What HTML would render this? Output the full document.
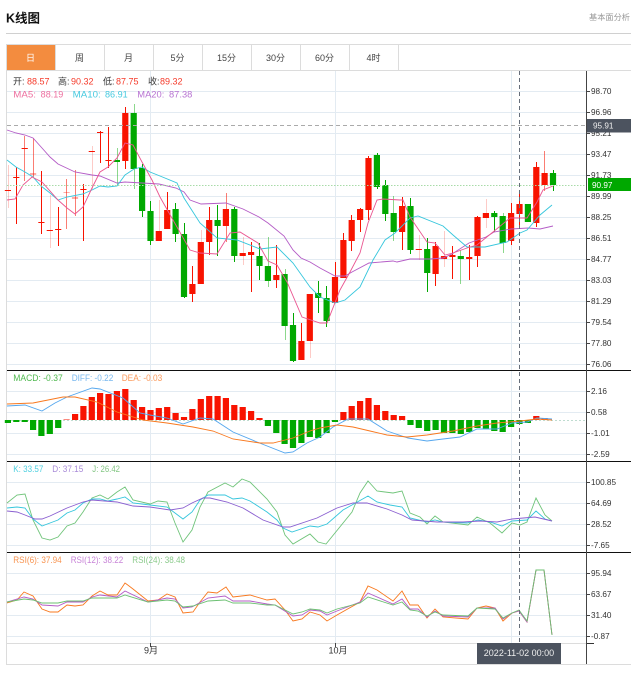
<!DOCTYPE html>
<html><head><meta charset="utf-8"><style>
html,body{margin:0;padding:0;background:#fff;width:631px;height:674px;overflow:hidden}
svg{display:block}
text{font-family:"Liberation Sans","Noto Sans CJK SC",sans-serif}
.ax{font-size:8.2px;fill:#333}
.lg{font-size:9px}
.tab{font-size:9px;fill:#444;text-anchor:middle}
</style></head><body>
<svg width="631" height="674" viewBox="0 0 631 674" xmlns="http://www.w3.org/2000/svg">
<!-- header -->
<text x="6" y="22.5" font-size="12.5" font-weight="bold" fill="#111">K线图</text>
<text x="589" y="20" font-size="8.2" fill="#999">基本面分析</text>
<path d="M6 33.5H631" stroke="#d0d0d0" fill="none"/>
<!-- tabs -->
<path d="M6 44.5H631M6 70.5H631" stroke="#dcdcdc" fill="none"/>
<rect x="7" y="45" width="48" height="25" fill="#f38c3f"/>
<path d="M6.5 44V664M55.5 45V70M104.5 45V70M153.5 45V70M202.5 45V70M251.5 45V70M300.5 45V70M349.5 45V70M398.5 45V70" stroke="#dcdcdc" fill="none"/>
<text class="tab" x="30.5" y="61" style="fill:#fff">日</text>
<text class="tab" x="79.5" y="61">周</text>
<text class="tab" x="128.5" y="61">月</text>
<text class="tab" x="177.5" y="61">5分</text>
<text class="tab" x="226.5" y="61">15分</text>
<text class="tab" x="275.5" y="61">30分</text>
<text class="tab" x="324.5" y="61">60分</text>
<text class="tab" x="373.5" y="61">4时</text>
<!-- grid -->
<path d="M7 91.5H586M7 112.5H586M7 133.5H586M7 154.5H586M7 175.5H586M7 196.5H586M7 217.5H586M7 238.5H586M7 259.5H586M7 280.5H586M7 301.5H586M7 322.5H586M7 343.5H586M7 364.5H586M7 391.5H586M7 412.5H586M7 433.5H586M7 454.5H586M7 482.5H586M7 503.5H586M7 524.5H586M7 545.5H586M7 573.5H586M7 594.5H586M7 615.5H586M7 636.5H586" stroke="#e3ebf2" fill="none"/>
<path d="M150.5 71V643M335.5 71V643M511.5 71V643" stroke="#e3ebf2" fill="none"/>
<!-- candles: wicks -->
<path fill="none" stroke="#f81300" d="M16.5 167V224M41.5 171V234M58.5 207V246M83.5 184V241M100.5 131V163M108.5 127V168M125.5 107V169M167.5 192V229M192.5 266V302M209.5 207V255M251.5 242V292M276.5 245V288M301.5 323V360M335.5 262V303M343.5 233V278M351.5 215V251M360.5 208V232M368.5 156V220M402.5 197V250M435.5 242V286M452.5 246V279M469.5 245V280M477.5 216V267M511.5 203V245M519.5 193V227M536.5 162V227"/>
<path fill="none" stroke="#f81300" stroke-opacity=".55" d="M24.5 136V181M33.5 138V177M66.5 179V229M75.5 170V216M226.5 193V242M544.5 151V191"/>
<path fill="none" stroke="#f81300" stroke-opacity=".22" d="M8.5 165V208M50.5 195V248M92.5 146V189M159.5 200V241M201.5 230V284M243.5 237V265M310.5 294V358M419.5 235V260M444.5 231V267M486.5 199V228"/>
<path fill="none" stroke="#00a800" d="M142.5 164V217M150.5 201V245M175.5 203V242M184.5 223V298M217.5 205V256M234.5 207V262M259.5 243V280M293.5 313V362M318.5 281V313M326.5 286V327M377.5 153V189M385.5 180V221M410.5 198V254M427.5 238V292M494.5 211V232M553.5 170V191"/>
<path fill="none" stroke="#00a800" stroke-opacity=".45" d="M117.5 148V185M134.5 104V189M268.5 237V287M285.5 269V340M393.5 196V241M460.5 250V284M503.5 213V253"/>
<!-- candles: bodies -->
<path fill="#f81300" d="M4.800 190h6.200v1h-6.200zM13.200 177h6.200v1h-6.200zM21.600 148h6.200v1h-6.200zM38.300 222h6.200v1h-6.200zM46.700 230h6.200v1h-6.200zM55.100 229h6.200v1h-6.200zM80.300 189h6.200v1h-6.200zM88.700 151h6.200v1h-6.200zM97 132h6.200v1h-6.200zM105.400 160h6.200v1h-6.200zM122.200 113h6.200v48h-6.200zM155.700 231h6.200v10h-6.200zM164.100 210h6.200v19h-6.200zM189.300 284h6.200v10h-6.200zM197.700 242h6.200v42h-6.200zM206.100 220h6.200v22h-6.200zM222.800 209h6.200v17h-6.200zM239.600 253h6.200v3h-6.200zM248 252h6.200v3h-6.200zM273.200 275h6.200v5h-6.200zM298.300 341h6.200v19h-6.200zM306.700 294h6.200v47h-6.200zM331.900 277h6.200v26h-6.200zM340.300 240h6.200v38h-6.200zM348.600 220h6.200v21h-6.200zM357 209h6.200v11h-6.200zM365.400 158h6.200v52h-6.200zM399 206h6.200v26h-6.200zM415.700 249h6.200v1h-6.200zM432.500 246h6.200v28h-6.200zM440.900 256h6.200v3h-6.200zM449.300 255h6.200v2h-6.200zM466.100 257h6.200v2h-6.200zM474.400 217h6.200v39h-6.200zM482.800 213h6.200v5h-6.200zM508 213h6.200v28h-6.200zM516.400 204h6.200v10h-6.200zM533.200 167h6.200v56h-6.200zM541.500 173h6.200v12h-6.200z"/>
<path fill="#f81300" fill-opacity=".35" d="M30 173h6.200v2h-6.200zM63.500 192h6.200v1h-6.200zM71.900 197h6.200v2h-6.200z"/>
<path fill="#00a800" d="M113.800 160h6.200v2h-6.200zM130.600 113h6.200v56h-6.200zM139 168h6.200v43h-6.200zM147.400 211h6.200v30h-6.200zM172.500 209h6.200v25h-6.200zM180.900 234h6.200v63h-6.200zM214.500 220h6.200v6h-6.200zM231.200 209h6.200v47h-6.200zM256.400 256h6.200v10h-6.200zM264.800 266h6.200v15h-6.200zM281.500 274h6.200v52h-6.200zM289.900 325h6.200v36h-6.200zM315.100 293h6.200v5h-6.200zM323.500 298h6.200v23h-6.200zM373.800 155h6.200v32h-6.200zM382.200 185h6.200v29h-6.200zM390.600 213h6.200v19h-6.200zM407.400 206h6.200v44h-6.200zM424.100 249h6.200v24h-6.200zM457.700 256h6.200v3h-6.200zM491.200 213h6.200v4h-6.200zM499.600 216h6.200v27h-6.200zM524.800 204h6.200v18h-6.200zM549.900 173h6.200v12h-6.200z"/>
<!-- MA lines -->
<polyline fill="none" stroke="#b45cc6" stroke-width=".9" points="7,130 16,133 25,135 33,138 42,148 50,157 58,164 75,172 92,175 100,176 117,183 125,182 142,183 159,184 176,188 184,192 190,200 201,204 226,203 243,209 259,217 268,223 284,236 293,250 301,258 310,262 320,268 335,276 345,276 352,272 369,263 393,261 397,262 410,259 430,259 443,258 452,254 469,243 486,237 494,232 511,229 528,228 540,229 553,226"/>
<polyline fill="none" stroke="#35c6dc" stroke-width=".9" points="7,160 16,167 25,172 33,177 41,186 50,193 58,200 67,197 83,194 92,190 100,186 108,187 117,186 125,175 134,169 142,167 150,172 160,176 177,183 184,198 200,223 217,238 237,240 260,249 277,247 293,263 310,287 320,297 335,303 345,300 360,287 373,260 385,240 395,233 410,218 418,216 443,226 453,235 467,247 485,247 507,242 520,233 527,230 540,215 552,205"/>
<polyline fill="none" stroke="#ea5590" stroke-width=".9" points="7,200 15,199 23,185 32,177 42,182 58,200 67,208 75,214 83,207 92,188 100,172 108,167 117,158 125,143 133,145 142,162 152,180 160,197 173,220 190,250 200,253 217,254 230,233 240,232 258,243 268,261 277,265 287,282 302,317 320,323 327,323 340,290 350,272 360,253 368,223 377,200 383,199 400,200 403,200 410,217 427,242 435,243 445,255 453,253 467,248 477,245 493,232 510,218 527,218 537,202 543,190 553,186"/>
<!-- MACD -->
<path d="M7 420.500H586" stroke="#bfdcd0" stroke-dasharray="2 2" fill="none"/>
<path fill="#f81300" d="M72 414h6.200v6h-6.200zM80.300 406h6.200v14h-6.200zM88.700 397h6.200v23h-6.200zM97 393h6.200v27h-6.200zM105.400 394h6.200v26h-6.200zM113.800 391h6.200v29h-6.200zM122.200 389h6.200v31h-6.200zM130.600 400h6.200v20h-6.200zM139 407h6.200v13h-6.200zM147.400 410h6.200v10h-6.200zM155.700 408h6.200v12h-6.200zM164.100 407h6.200v13h-6.200zM172.500 413h6.200v7h-6.200zM180.900 417h6.200v3h-6.200zM189.300 409h6.200v11h-6.200zM197.700 399h6.200v21h-6.200zM206.100 396h6.200v24h-6.200zM214.500 396h6.200v24h-6.200zM222.800 398h6.200v22h-6.200zM231.200 405h6.200v15h-6.200zM239.600 407h6.200v13h-6.200zM248 411h6.200v9h-6.200zM256.400 418h6.200v2h-6.200zM340.300 412h6.200v8h-6.200zM348.600 406h6.200v14h-6.200zM357 401h6.200v19h-6.200zM365.400 398h6.200v22h-6.200zM373.800 405h6.200v15h-6.200zM382.200 411h6.200v9h-6.200zM390.600 415h6.200v5h-6.200zM399 416h6.200v4h-6.200zM533.200 416h6.200v4h-6.200zM541.500 418h6.200v2h-6.200z"/>
<path fill="#f81300" fill-opacity=".5" d="M63.500 419h6.200v1h-6.200z"/>
<path fill="#00a800" d="M4.800 420h6.200v3h-6.200zM13.200 420h6.200v2h-6.200zM21.600 420h6.200v2h-6.200zM30 420h6.200v10h-6.200zM38.300 420h6.200v16h-6.200zM46.700 420h6.200v14h-6.200zM55.100 420h6.200v8h-6.200zM264.800 420h6.200v6h-6.200zM273.200 420h6.200v13h-6.200zM281.500 420h6.200v24h-6.200zM289.900 420h6.200v28h-6.200zM298.300 420h6.200v23h-6.200zM306.700 420h6.200v17h-6.200zM315.100 420h6.200v18h-6.200zM323.500 420h6.200v13h-6.200zM331.900 420h6.200v2h-6.200zM407.400 420h6.200v5h-6.200zM415.700 420h6.200v8h-6.200zM424.100 420h6.200v11h-6.200zM432.500 420h6.200v10h-6.200zM440.900 420h6.200v13h-6.200zM449.300 420h6.200v13h-6.200zM457.700 420h6.200v14h-6.200zM466.100 420h6.200v12h-6.200zM474.400 420h6.200v8h-6.200zM482.800 420h6.200v9h-6.200zM491.200 420h6.200v11h-6.200zM499.600 420h6.200v12h-6.200zM508 420h6.200v7h-6.200zM516.400 420h6.200v4h-6.200zM524.800 420h6.200v3h-6.200z"/>
<polyline fill="none" stroke="#55a7ee" stroke-width=".9" points="7,406 25,405 42,411 55,403 67,397 92,388 100,389 123,398 140,413 150,415 167,418 183,424 200,418 213,419 233,432 257,442 285,453 293,452 307,443 320,437 333,427 348,419 368,419 387,431 408,438 427,441 443,439 460,437 477,429 497,429 512,423 527,422 537,418 552,419"/>
<polyline fill="none" stroke="#f8781e" stroke-width=".9" points="7,404 33,403 63,397 75,397 97,402 117,412 143,420 167,423 193,427 213,431 233,439 260,443 273,443 293,438 310,431 320,428 337,425 353,427 370,431 387,435 407,437 427,435 453,431 477,426 497,423 520,421 537,419 552,420"/>
<!-- KDJ -->
<polyline fill="none" stroke="#70c47a" stroke-width=".9" points="7,503 17,495 25,494 33,520 42,538 50,540 58,537 67,526 75,523 83,512 92,498 100,495 108,499 117,492 125,487 133,500 150,504 158,501 167,502 175,523 183,542 192,530 200,507 208,492 225,483 233,487 242,479 250,482 267,499 277,512 285,535 293,544 310,534 318,542 326,544 352,512 360,493 368,481 377,491 393,493 402,491 410,513 420,517 427,524 435,516 443,522 468,525 477,517 490,523 502,533 512,523 520,525 527,522 536,498 545,515 552,521"/>
<polyline fill="none" stroke="#35c6dc" stroke-width=".9" points="7,508 17,507 25,508 33,519 42,526 50,523 58,520 67,513 75,510 83,503 92,499 100,499 108,501 117,499 125,497 133,503 150,505 167,507 175,513 183,519 192,512 200,500 208,495 225,495 233,499 242,498 250,501 267,512 277,520 283,528 292,532 310,526 318,527 327,524 343,510 368,496 377,502 390,505 402,507 410,518 427,522 435,520 443,522 467,523 478,520 490,522 502,526 512,521 527,520 536,511 545,519 552,521"/>
<polyline fill="none" stroke="#8a5fd0" stroke-width=".9" points="7,511 17,512 25,515 35,519 42,519 50,516 67,508 83,502 92,500 117,502 133,506 150,507 170,510 183,508 192,503 203,498 210,498 227,502 243,508 263,520 283,527 290,527 317,518 337,508 353,503 367,503 387,509 402,515 412,520 437,522 463,522 480,521 497,522 512,519 535,517 552,521"/>
<!-- RSI -->
<polyline fill="none" stroke="#f8781e" stroke-width=".9" points="7,603 17,600 24,592 33,596 42,609 50,612 58,612 67,605 75,606 83,605 92,596 100,591 108,595 117,595 125,583 133,589 148,601 158,600 167,594 175,597 183,613 193,612 200,602 208,592 217,593 226,587 233,597 250,595 267,600 275,599 285,610 293,621 302,619 310,612 320,615 327,621 337,615 360,602 368,586 377,590 393,601 402,591 410,605 418,605 427,618 435,609 443,617 468,619 477,608 486,606 495,608 503,621 512,613 519,611 527,622 536,570 544,570 552,635"/>
<polyline fill="none" stroke="#b45cc6" stroke-width=".9" points="7,602 24,597 33,599 42,605 58,606 67,602 83,602 92,597 100,595 117,597 125,591 148,602 167,598 175,599 183,608 192,607 208,598 225,596 233,601 250,601 267,604 275,605 293,616 302,615 310,610 320,611 327,615 337,611 360,602 368,593 393,604 402,599 410,609 418,609 427,617 435,611 443,616 468,617 477,608 495,608 503,619 512,613 519,611 527,622 536,570 544,570 552,635"/>
<polyline fill="none" stroke="#6cc072" stroke-width=".9" points="7,602 24,599 33,600 42,603 58,603 67,601 83,601 92,598 117,598 125,595 148,602 167,600 175,601 183,607 193,606 208,601 225,600 233,603 250,603 267,605 275,605 293,614 302,612 310,609 320,610 327,613 337,609 360,603 368,597 393,605 402,602 410,610 418,611 427,616 435,612 443,615 468,616 477,608 495,609 503,618 512,613 519,610 527,621 536,570 544,570 552,635"/>
<!-- dashed lines -->
<path d="M7 125.500H586" stroke="#aaa" stroke-dasharray="4 3" fill="none"/>
<path d="M7 185.500H586" stroke="#a8dba8" stroke-dasharray="1.500 1.500" fill="none"/>
<path d="M519.500 71V643" stroke="#666e7a" stroke-dasharray="4 3" fill="none"/>
<!-- separators & axis -->
<path d="M7 370.500H631M7 461.500H631M7 552.500H631" stroke="#111" fill="none"/>
<path d="M7 643.500H586M6 664.500H631" stroke="#dcdcdc" fill="none"/>
<path d="M586 643.500H594" stroke="#333" fill="none"/>
<path d="M586.500 71V664" stroke="#444" fill="none"/>
<path d="M587 91.500h3M587 112.500h3M587 133.500h3M587 154.500h3M587 175.500h3M587 196.500h3M587 217.500h3M587 238.500h3M587 259.500h3M587 280.500h3M587 301.500h3M587 322.500h3M587 343.500h3M587 364.500h3M587 391.500h3M587 412.500h3M587 433.500h3M587 454.500h3M587 482.500h3M587 503.500h3M587 524.500h3M587 545.500h3M587 573.500h3M587 594.500h3M587 615.500h3M587 636.500h3" stroke="#444" fill="none"/>
<path d="M150.500 643v4M335.500 643v4" stroke="#444" fill="none"/>
<!-- axis labels -->
<text class="ax" x="591" y="94">98.70</text>
<text class="ax" x="591" y="115">96.96</text>
<text class="ax" x="591" y="136">95.21</text>
<text class="ax" x="591" y="157">93.47</text>
<text class="ax" x="591" y="178">91.73</text>
<text class="ax" x="591" y="199">89.99</text>
<text class="ax" x="591" y="220">88.25</text>
<text class="ax" x="591" y="241">86.51</text>
<text class="ax" x="591" y="262">84.77</text>
<text class="ax" x="591" y="283">83.03</text>
<text class="ax" x="591" y="304">81.29</text>
<text class="ax" x="591" y="325">79.54</text>
<text class="ax" x="591" y="346">77.80</text>
<text class="ax" x="591" y="367">76.06</text>
<text class="ax" x="591" y="394">2.16</text>
<text class="ax" x="591" y="415">0.58</text>
<text class="ax" x="591" y="436">-1.01</text>
<text class="ax" x="591" y="457">-2.59</text>
<text class="ax" x="591" y="485">100.85</text>
<text class="ax" x="591" y="506">64.69</text>
<text class="ax" x="591" y="527">28.52</text>
<text class="ax" x="591" y="548">-7.65</text>
<text class="ax" x="591" y="576">95.94</text>
<text class="ax" x="591" y="597">63.67</text>
<text class="ax" x="591" y="618">31.40</text>
<text class="ax" x="591" y="639">-0.87</text>
<!-- price tags -->
<rect x="587" y="119" width="44" height="13.500" fill="#4c535f"/>
<text class="ax" x="593" y="128.500" style="fill:#eee">95.91</text>
<rect x="588" y="178" width="43" height="13" fill="#00a800"/>
<text class="ax" x="592" y="188" style="fill:#fff">90.97</text>
<!-- legends -->
<g class="lg">
<text x="13" y="84.500" fill="#333">开:</text><text x="27" y="84.500" fill="#f53a2a">88.57</text>
<text x="58" y="84.500" fill="#333">高:</text><text x="71" y="84.500" fill="#f53a2a">90.32</text>
<text x="103" y="84.500" fill="#333">低:</text><text x="116" y="84.500" fill="#f53a2a">87.75</text>
<text x="148" y="84.500" fill="#333">收:</text><text x="160" y="84.500" fill="#f53a2a">89.32</text>
<text x="13.3" y="97.500" fill="#ee6f9f" textLength="22.7" lengthAdjust="spacingAndGlyphs">MA5:</text><text x="40.7" y="97.500" fill="#ee6f9f" textLength="22.6" lengthAdjust="spacingAndGlyphs">88.19</text>
<text x="72.7" y="97.500" fill="#45c9df" textLength="28" lengthAdjust="spacingAndGlyphs">MA10:</text><text x="105" y="97.500" fill="#45c9df" textLength="22.7" lengthAdjust="spacingAndGlyphs">86.91</text>
<text x="137.3" y="97.500" fill="#b873d2" textLength="27" lengthAdjust="spacingAndGlyphs">MA20:</text><text x="169" y="97.500" fill="#b873d2" textLength="23.3" lengthAdjust="spacingAndGlyphs">87.38</text>
<text x="13.3" y="381" fill="#4fb84f" textLength="49.4" lengthAdjust="spacingAndGlyphs">MACD: -0.37</text>
<text x="71.7" y="381" fill="#78b8ef" textLength="41.6" lengthAdjust="spacingAndGlyphs">DIFF: -0.22</text>
<text x="121.7" y="381" fill="#fb9a5c" textLength="40.6" lengthAdjust="spacingAndGlyphs">DEA: -0.03</text>
<text x="13.3" y="472" fill="#4fd0e0" textLength="30" lengthAdjust="spacingAndGlyphs">K: 33.57</text>
<text x="52.3" y="472" fill="#a98bd8" textLength="31" lengthAdjust="spacingAndGlyphs">D: 37.15</text>
<text x="92.3" y="472" fill="#85c785" textLength="27.7" lengthAdjust="spacingAndGlyphs">J: 26.42</text>
<text x="13.3" y="563" fill="#f89450" textLength="48.4" lengthAdjust="spacingAndGlyphs">RSI(6): 37.94</text>
<text x="70.7" y="563" fill="#c884d8" textLength="52.6" lengthAdjust="spacingAndGlyphs">RSI(12): 38.22</text>
<text x="132.3" y="563" fill="#8ccb8c" textLength="52.7" lengthAdjust="spacingAndGlyphs">RSI(24): 38.48</text>
</g>
<!-- x labels -->
<text x="151" y="653.5" font-size="9" fill="#333" text-anchor="middle">9月</text>
<text x="338" y="653.5" font-size="9" fill="#333" text-anchor="middle">10月</text>
<rect x="477" y="643" width="84" height="21" fill="#4c535f"/>
<text x="519" y="656" font-size="9" fill="#eee" text-anchor="middle">2022-11-02 00:00</text>
</svg>
</body></html>
